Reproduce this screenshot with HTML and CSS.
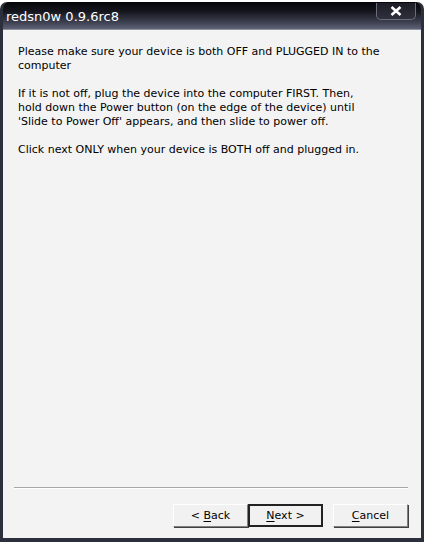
FILE: index.html
```html
<!DOCTYPE html>
<html lang="en">
<head>
  <meta charset="UTF-8" />
  <title>redsn0w 0.9.6rc8</title>
  <link rel="stylesheet" href="styles.css">
</head>
<body>
  <div class="window">
    <div class="title-bar">
      <span class="title">redsn0w 0.9.6rc8</span>
      <div class="close-btn">
        <svg width="12" height="10" viewBox="0 0 12 10"><path d="M1.5 1 L10.5 9 M10.5 1 L1.5 9" stroke="#fff" stroke-width="2.6"/></svg>
      </div>
    </div>
    <div class="client">
      <div class="message">
        <p>Please make sure your device is both OFF and PLUGGED IN to the<br>computer</p>
        <p>If it is not off, plug the device into the computer FIRST. Then,<br>hold down the Power button (on the edge of the device) until<br>'Slide to Power Off' appears, and then slide to power off.</p>
        <p>Click next ONLY when your device is BOTH off and plugged in.</p>
      </div>
      <div class="footer">
        <hr class="divider">
        <div class="buttons">
          <button>&lt; <u>B</u>ack</button>
          <button class="default"><u>N</u>ext &gt;</button>
          <button class="cancel"><u>C</u>ancel</button>
        </div>
      </div>
    </div>
  </div>
</body>
</html>
```

FILE: styles.css
```css
body { margin: 0; background: #fff; font-family: "DejaVu Sans", sans-serif; font-size: 11px; }
.window { margin-top: 2px; height: 540px; box-sizing: border-box; background: #2c2f3c; border-radius: 7px 7px 0 0; padding: 0 3px 4px 3px; display: flex; flex-direction: column; }
.title-bar { height: 27px; display: flex; align-items: center; justify-content: space-between; padding: 0 5px 0 3px; border-radius: 7px 7px 0 0; background: linear-gradient(#050508 0%, #15161e 35%, #3d4050 75%, #5f6276 100%); }
.title { color: #fff; font-size: 13px; margin-top: 1px; }
.close-btn { width: 40px; height: 17px; margin-top: -8px; box-sizing: border-box; border: 1px solid #6a6d7c; border-top: none; border-radius: 0 0 5px 5px; background: linear-gradient(#1c1d26, #2e303c); display: flex; align-items: center; justify-content: center; }
.client { flex: 1; background: #f3f3f3; display: flex; flex-direction: column; border-top: 1px solid #8e909c; }
.message { flex: 1; padding: 15px 15px 0 15px; color: #000; line-height: 14px; white-space: nowrap; }
.message p { margin: 0 0 14px 0; }
.footer { padding: 0 13px 11px 11px; }
.divider { margin: 0 0 15px 0; border: none; border-top: 1px solid #a8a8a8; border-bottom: 1px solid #fff; }
.buttons { display: flex; justify-content: flex-end; }
button { width: 75px; height: 23px; font-family: inherit; font-size: 11px; color: #000; background: #f1f1f1; border: 1px solid; border-color: #fff #808080 #808080 #fff; box-shadow: 1px 1px 0 #404040; padding: 0; }
button.default { border: 2px solid #222; box-shadow: none; margin-right: 10px; }
u { text-decoration: underline; text-underline-offset: 2px; }
```
